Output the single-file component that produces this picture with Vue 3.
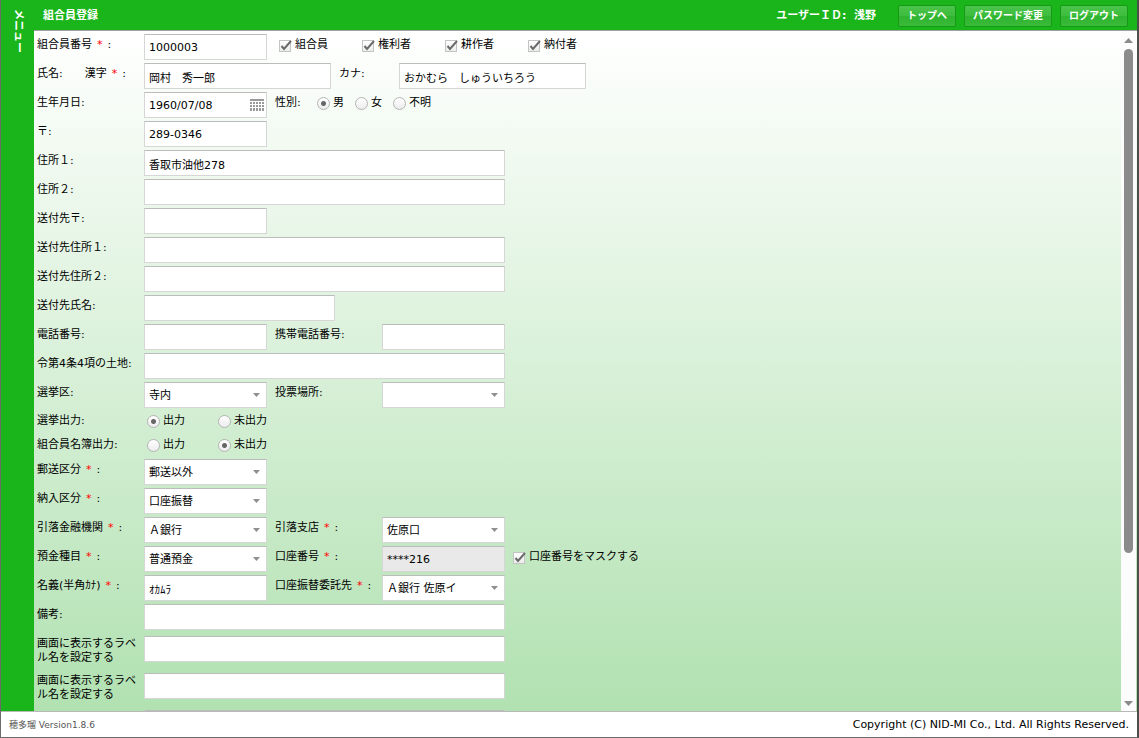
<script setup>
import { ref } from 'vue'

const roles = ref([
  { label: '組合員', on: true },
  { label: '権利者', on: true },
  { label: '耕作者', on: true },
  { label: '納付者', on: true },
])

const text = (label, id, value = '', size = 'sm', extra = {}) => ({ label, id, value, size, type: 'text', ...extra })
const select = (label, id, value, extra = {}) => ({ label, id, value, size: 'sm', type: 'select', ...extra })
const radio = (label, id, value, options, extra = {}) => ({ label, id, value, options, type: 'radio', ...extra })

const rows = ref([
  { fields: [text('組合員番号', 'member-no', '1000003', 'sm', { required: true })], roles: true },
  {
    fields: [
      text('氏名:　　漢字', 'name', '岡村　秀一郎', 'md', { required: true }),
      text('カナ', 'kana', 'おかむら　しゅういちろう', 'md', { near: true }),
    ],
  },
  {
    fields: [
      text('生年月日', 'birth', '1960/07/08', 'sm', { calendar: true }),
      radio('性別', 'gender', '男', ['男', '女', '不明'], { tight: true }),
    ],
  },
  { fields: [text('〒', 'zip', '289-0346')] },
  { fields: [text('住所１', 'addr1', '香取市油他278', 'lg')] },
  { fields: [text('住所２', 'addr2', '', 'lg')] },
  { fields: [text('送付先〒', 'send-zip')] },
  { fields: [text('送付先住所１', 'send-addr1', '', 'lg')] },
  { fields: [text('送付先住所２', 'send-addr2', '', 'lg')] },
  { fields: [text('送付先氏名', 'send-name', '', 'recipient')] },
  { fields: [text('電話番号', 'tel'), text('携帯電話番号', 'mobile')] },
  { fields: [text('令第4条4項の土地', 'land', '', 'lg')] },
  { fields: [select('選挙区', 'district', '寺内'), select('投票場所', 'poll', '')] },
  { low: true, fields: [radio('選挙出力', 'vote-out', '出力', ['出力', '未出力'])] },
  { low: true, fields: [radio('組合員名簿出力', 'list-out', '未出力', ['出力', '未出力'])] },
  { fields: [select('郵送区分', 'mail', '郵送以外', { required: true })] },
  { fields: [select('納入区分', 'payment', '口座振替', { required: true })] },
  {
    fields: [
      select('引落金融機関', 'bank', 'Ａ銀行', { required: true }),
      select('引落支店', 'branch', '佐原口', { required: true }),
    ],
  },
  {
    fields: [
      select('預金種目', 'deposit', '普通預金', { required: true }),
      text('口座番号', 'account', '****216', 'sm', { required: true, disabled: true }),
    ],
    mask: true,
  },
  {
    fields: [
      text('名義(半角ｶﾅ)', 'holder', 'ｵｶﾑﾗ', 'sm', { required: true }),
      select('口座振替委託先', 'agent', 'Ａ銀行 佐原イ', { required: true }),
    ],
  },
  { fields: [text('備考', 'note', '', 'lg')] },
  { tall: true, fields: [text('画面に表示するラベル名を設定する', 'custom1', '', 'lg', { plain: true })] },
  { tall: true, fields: [text('画面に表示するラベル名を設定する', 'custom2', '', 'lg', { plain: true })] },
  { tall: true, fields: [text('', 'custom3', '', 'lg', { plain: true })] },
])

const masked = ref(true)
</script>

<template>
  <div class="app">
    <button class="menu" type="button"><span>メニュー</span></button>
    <div class="main">
      <header class="header">
        <h1>組合員登録</h1>
        <div class="user">ユーザーＩＤ: &nbsp;浅野</div>
        <nav class="actions">
          <button type="button">トップへ</button>
          <button type="button">パスワード変更</button>
          <button type="button">ログアウト</button>
        </nav>
      </header>

      <div class="body">
        <form class="form" @submit.prevent>
          <div v-for="(row, i) in rows" :key="i" class="row" :class="{ low: row.low, tall: row.tall }">
            <div
              v-for="f in row.fields"
              :key="f.id"
              class="field"
              :class="{ near: f.near, tight: f.tight }"
              :role="f.type === 'radio' ? 'radiogroup' : undefined"
              :aria-labelledby="f.type === 'radio' ? f.id + '-label' : undefined"
            >
              <span v-if="f.type === 'radio'" :id="f.id + '-label'" class="label">{{ f.label }}:</span>
              <label v-else class="label" :for="f.id">{{ f.label }}<em v-if="f.required">*</em><template v-if="!f.plain">:</template></label>

              <div v-if="f.type === 'text'" class="box" :class="f.size">
                <input :id="f.id" v-model="f.value" type="text" :disabled="f.disabled" />
                <button v-if="f.calendar" class="cal" type="button" aria-label="カレンダー">
                  <svg viewBox="0 0 14 13" width="14" height="13" shape-rendering="crispEdges">
                    <path d="M0 0h14v2H0z" fill="#999" />
                    <path
                      d="M0 3h2v2H0zM3 3h2v2H3zM6 3h2v2H6zM9 3h2v2H9zM12 3h2v2h-2zM0 6h2v2H0zM3 6h2v2H3zM6 6h2v2H6zM9 6h2v2H9zM12 6h2v2h-2zM0 9h2v3H0zM3 9h2v3H3zM6 9h2v3H6zM9 9h2v3H9zM12 9h2v3h-2z"
                      fill="#999"
                    />
                  </svg>
                </button>
              </div>

              <div v-else-if="f.type === 'select'" class="box" :class="f.size">
                <select :id="f.id" v-model="f.value">
                  <option :value="f.value">{{ f.value }}</option>
                </select>
                <svg class="arrow" viewBox="0 0 7 4" width="7" height="4"><path d="M0 0h7L3.5 4z" fill="#8f8f8f" /></svg>
              </div>

              <div v-else class="radios">
                <label v-for="o in f.options" :key="o">
                  <input v-model="f.value" type="radio" :name="f.id" :value="o" />{{ o }}
                </label>
              </div>
            </div>

            <div v-if="row.roles" class="checks roles">
              <label v-for="r in roles" :key="r.label">
                <span class="check">
                  <input v-model="r.on" type="checkbox" />
                  <svg viewBox="0 0 13 12" width="13" height="12"><path d="M2.500 6l2.500 3L12 1" fill="none" stroke="#6a6a6a" stroke-width="2" /></svg>
                </span>{{ r.label }}
              </label>
            </div>
            <div v-if="row.mask" class="checks">
              <label>
                <span class="check">
                  <input v-model="masked" type="checkbox" />
                  <svg viewBox="0 0 13 12" width="13" height="12"><path d="M2.500 6l2.500 3L12 1" fill="none" stroke="#6a6a6a" stroke-width="2" /></svg>
                </span>口座番号をマスクする
              </label>
            </div>
          </div>
        </form>
        <div class="scrollbar" aria-hidden="true">
          <svg viewBox="0 0 9 5" width="9" height="5"><path d="M0 5h9L4.500 0z" fill="#8b8b8b" /></svg>
          <div class="track"><div class="thumb"></div></div>
          <svg viewBox="0 0 9 5" width="9" height="5"><path d="M0 0h9L4.500 5z" fill="#8b8b8b" /></svg>
        </div>
      </div>
    </div>
    <footer class="footer">
      <span class="version">穂多瑠 Version1.8.6</span>
      <span>Copyright (C) NID-MI Co., Ltd. All Rights Reserved.</span>
    </footer>
  </div>
</template>

<style>
body {
  background: #fff;
}
</style>

<style scoped>
.app,
.app * {
  box-sizing: border-box;
}
.app {
  display: grid;
  grid-template-columns: 33px minmax(0, 1fr);
  grid-template-rows: minmax(0, 1fr) auto;
  height: 100vh;
  overflow: hidden;
  border-left: 1px solid #6b6b6b;
  border-right: 2px solid #4a4f4a;
  border-bottom: 1px solid #6b6b6b;
  font: 11px/14px "DejaVu Sans", "Noto Sans CJK JP", sans-serif;
  color: #000;
}
input,
select,
button {
  font: inherit;
  color: inherit;
  margin: 0;
}
.menu {
  border: 0;
  padding: 9px 0 0;
  background: #1ab51a;
  color: #fff;
  font-weight: bold;
  display: flex;
  justify-content: center;
  align-items: flex-start;
}
.menu span {
  writing-mode: vertical-rl;
  text-orientation: sideways;
}
.main {
  display: flex;
  flex-direction: column;
  min-height: 0;
}
.header {
  display: flex;
  align-items: center;
  flex: none;
  height: 31px;
  padding: 2px 9px 0;
  background: #1ab51a;
  border-bottom: 1px solid #a0a0a0;
  color: #fff;
  font-weight: bold;
}
h1 {
  margin: 0;
  font-size: 11px;
}
.user {
  margin-left: auto;
  margin-right: 22px;
}
.actions {
  display: flex;
  gap: 8px;
}
.actions button {
  height: 22px;
  padding: 0 8px;
  border: 1px solid #169a16;
  border-radius: 2px;
  background: linear-gradient(#4bc44b, #3cbc3c 50%, #2fb42f 51%, #3aba3a);
  font-size: 10px;
  line-height: 14px;
  font-weight: bold;
}
.body {
  flex: 1;
  display: flex;
  min-height: 0;
  background: linear-gradient(#fff, #b1e1b1);
}
.form {
  flex: 1;
  min-width: 0;
  overflow: hidden;
  padding: 3px 0 0 3px;
  display: flex;
  flex-direction: column;
  gap: 3px;
}
.row {
  display: flex;
  flex: none;
  gap: 8px;
  height: 26px;
}
.row.low {
  height: 21px;
}
.row.tall {
  height: 34px;
}
.tall .box {
  margin-top: 3px;
}
.field {
  display: flex;
}
.label {
  width: 107px;
  padding: 4px 4px 0 0;
  flex: none;
}
.low .label {
  padding-top: 3px;
}
.near .label {
  width: 60px;
}
.tight .label {
  width: 42px;
}
.label em {
  color: #f00;
  font-style: normal;
  margin: 0 5px;
}
.box {
  position: relative;
  height: 26px;
}
.sm {
  width: 123px;
}
.md {
  width: 187px;
}
.recipient {
  width: 191px;
}
.lg {
  width: 361px;
}
.box input,
.box select {
  display: block;
  width: 100%;
  height: 100%;
  padding: 1px 4px 0;
  border: 1px solid #d6d6d6;
  border-top-color: #bcbcbc;
  border-radius: 0;
  background: #fff;
  appearance: none;
  outline: 0;
}
.box input:disabled {
  background: #e9e9e9;
}
.arrow {
  position: absolute;
  right: 7px;
  top: 11px;
  pointer-events: none;
}
.cal {
  position: absolute;
  right: 3px;
  top: 7px;
  padding: 0;
  border: 0;
  background: none;
}
.cal svg {
  display: block;
}
.radios {
  display: flex;
  padding: 4px 0 0 3px;
}
.low .radios {
  padding-top: 3px;
}
.radios label {
  display: flex;
  gap: 3px;
  min-width: 71px;
}
.tight .radios {
  padding-left: 0;
}
.tight .radios label {
  min-width: 38px;
}
.radios input {
  appearance: none;
  width: 13px;
  height: 13px;
  margin-top: 1px;
  border: 1px solid #b4b4b4;
  border-radius: 50%;
  background: linear-gradient(#fff, #ececec);
}
.radios input:checked {
  background: radial-gradient(circle, #666 2px, transparent 3px), linear-gradient(#fff, #ececec);
}
.checks {
  display: flex;
  padding: 4px 0 0;
}
.checks.roles {
  padding-left: 4px;
}
.checks label {
  display: flex;
  gap: 3px;
  min-width: 83px;
}
.check {
  position: relative;
  width: 13px;
  height: 12px;
  margin-top: 2px;
}
.check input {
  display: block;
  appearance: none;
  width: 12px;
  height: 12px;
  border: 1px solid #c4c4c4;
  background: linear-gradient(#fff, #ececec);
}
.check svg {
  position: absolute;
  left: 0;
  top: 0;
  visibility: hidden;
  pointer-events: none;
}
.check input:checked + svg {
  visibility: visible;
}
.scrollbar {
  width: 15px;
  margin-right: 1px;
  padding: 7px 0 5px;
  background: #fcfcfc;
  display: flex;
  flex-direction: column;
  align-items: center;
  gap: 6px;
}
.track {
  flex: 1;
  width: 9px;
}
.thumb {
  height: 78%;
  border-radius: 5px;
  background: #8b8b8b;
}
.footer {
  grid-column: 1 / -1;
  display: flex;
  justify-content: space-between;
  align-items: center;
  height: 26px;
  padding: 0 8px;
  border-top: 1px solid #b8b8b8;
  background: #fff;
}
.version {
  font-size: 9px;
  color: #555;
}
</style>
